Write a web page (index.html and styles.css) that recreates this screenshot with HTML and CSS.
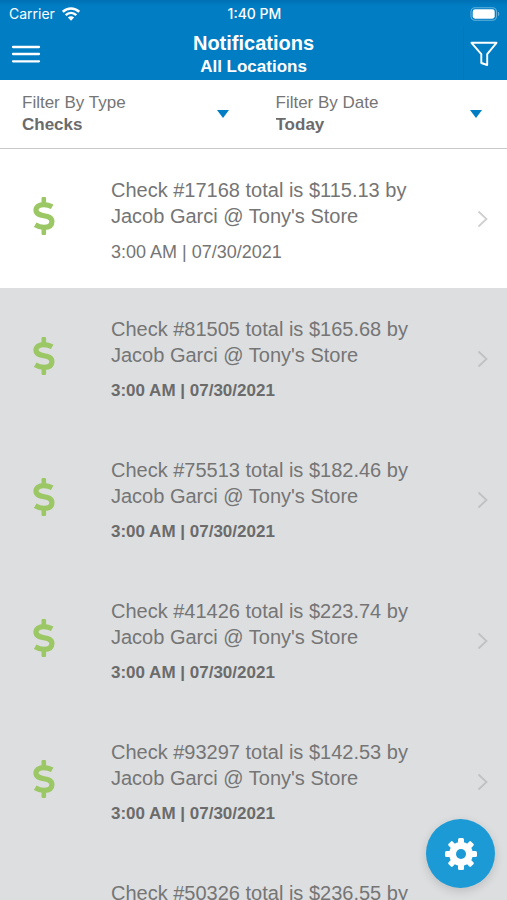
FILE: index.html
```html
<!DOCTYPE html>
<html lang="en">
<head>
<meta charset="utf-8">
<meta name="viewport" content="width=device-width, initial-scale=1">
<title>Notifications</title>
<link rel="stylesheet" href="styles.css">
</head>
<body>
<svg class="defs" aria-hidden="true">
  <symbol id="dollar" viewBox="0 0 22 38">
    <path d="M19.200 9.800C16.500 8.300 14 7.600 11 7.600C6 7.600 3 9.700 3 13C3 21.500 18.900 15.900 18.900 24.500C18.900 28.500 16 30.400 11 30.400C8 30.400 5 29.500 2.200 27.800" fill="none" stroke="currentColor" stroke-width="5.200"/>
    <path d="M10.800 1.800V7M10.800 31V36.200" fill="none" stroke="currentColor" stroke-width="4.600" stroke-linecap="round"/>
  </symbol>
  <symbol id="chevron" viewBox="0 0 12 18">
    <path d="M1.500 1.500L9.500 9L1.500 16.500" fill="none" stroke="currentColor" stroke-width="1.800"/>
  </symbol>
</svg>

<header class="topbar">
  <div class="status">
    <span class="carrier">Carrier
      <svg width="18" height="14" viewBox="0 0 18 14" aria-hidden="true">
        <path d="M.8 4.800C5.500 .3 12.500 .3 17.200 4.800M3.700 8.100C6.800 5.200 11.200 5.200 14.300 8.100" fill="none" stroke="currentColor" stroke-width="2.500"/>
        <path d="M9 13.700L5.900 10.500C7.600 8.900 10.400 8.900 12.100 10.500Z" fill="currentColor"/>
      </svg>
    </span>
    <span class="clock">1:40 PM</span>
    <svg class="battery" width="30" height="14" viewBox="0 0 30 14" aria-hidden="true">
      <rect x="1" y=".7" width="25.500" height="12.600" rx="4" fill="none" stroke="#66b1db" stroke-width="1.100"/>
      <rect x="2.700" y="2.300" width="22" height="9.400" rx="2.400" fill="currentColor"/>
      <path d="M28 4.800C29.700 5.400 29.700 8.600 28 9.200Z" fill="#66b1db"/>
    </svg>
  </div>
  <div class="navbar">
    <button class="nav-button" type="button" aria-label="Menu">
      <svg width="30" height="20" viewBox="0 0 30 20"><path d="M2 3H28M2 10H28M2 17.300H28" stroke="currentColor" stroke-width="2.300" stroke-linecap="round"/></svg>
    </button>
    <div class="titles">
      <h1>Notifications</h1>
      <p>All Locations</p>
    </div>
    <button class="nav-button nav-filter" type="button" aria-label="Filter">
      <svg width="28" height="26" viewBox="0 0 28 26"><path d="M1.500 1.800H26.500L17.200 13.200V24L11.300 22V13.200Z" fill="none" stroke="currentColor" stroke-width="1.900" stroke-linejoin="round"/></svg>
    </button>
  </div>
</header>

<form class="filters">
  <div class="filter">
    <label for="type">Filter By Type</label>
    <select id="type"><option>Checks</option></select>
    <svg class="caret" width="12" height="8" viewBox="0 0 12 8" aria-hidden="true"><path d="M0 0H12L6 8Z" fill="currentColor"/></svg>
  </div>
  <div class="filter">
    <label for="date">Filter By Date</label>
    <select id="date"><option>Today</option></select>
    <svg class="caret" width="12" height="8" viewBox="0 0 12 8" aria-hidden="true"><path d="M0 0H12L6 8Z" fill="currentColor"/></svg>
  </div>
</form>

<main class="list">
  <a class="row read" href="#17168">
    <svg class="dollar" aria-hidden="true"><use href="#dollar"/></svg>
    <div class="body"><p class="message">Check #17168 total is $115.13 by Jacob Garci @ Tony's Store</p><p class="time">3:00 AM | 07/30/2021</p></div>
    <svg class="chevron" aria-hidden="true"><use href="#chevron"/></svg>
  </a>
  <a class="row" href="#81505">
    <svg class="dollar" aria-hidden="true"><use href="#dollar"/></svg>
    <div class="body"><p class="message">Check #81505 total is $165.68 by Jacob Garci @ Tony's Store</p><p class="time">3:00 AM | 07/30/2021</p></div>
    <svg class="chevron" aria-hidden="true"><use href="#chevron"/></svg>
  </a>
  <a class="row" href="#75513">
    <svg class="dollar" aria-hidden="true"><use href="#dollar"/></svg>
    <div class="body"><p class="message">Check #75513 total is $182.46 by Jacob Garci @ Tony's Store</p><p class="time">3:00 AM | 07/30/2021</p></div>
    <svg class="chevron" aria-hidden="true"><use href="#chevron"/></svg>
  </a>
  <a class="row" href="#41426">
    <svg class="dollar" aria-hidden="true"><use href="#dollar"/></svg>
    <div class="body"><p class="message">Check #41426 total is $223.74 by Jacob Garci @ Tony's Store</p><p class="time">3:00 AM | 07/30/2021</p></div>
    <svg class="chevron" aria-hidden="true"><use href="#chevron"/></svg>
  </a>
  <a class="row" href="#93297">
    <svg class="dollar" aria-hidden="true"><use href="#dollar"/></svg>
    <div class="body"><p class="message">Check #93297 total is $142.53 by Jacob Garci @ Tony's Store</p><p class="time">3:00 AM | 07/30/2021</p></div>
    <svg class="chevron" aria-hidden="true"><use href="#chevron"/></svg>
  </a>
  <a class="row" href="#50326">
    <svg class="dollar" aria-hidden="true"><use href="#dollar"/></svg>
    <div class="body"><p class="message">Check #50326 total is $236.55 by Jacob Garci @ Tony's Store</p><p class="time">3:00 AM | 07/30/2021</p></div>
    <svg class="chevron" aria-hidden="true"><use href="#chevron"/></svg>
  </a>
</main>

<button class="fab" type="button" aria-label="Settings">
  <svg width="34" height="34" viewBox="-17 -17 34 34">
    <g fill="currentColor">
      <g id="teeth">
        <rect x="-3" y="-16" width="6" height="32" rx="1.500"/>
        <rect x="-16" y="-3" width="32" height="6" rx="1.500"/>
      </g>
      <use href="#teeth" transform="rotate(45)"/>
    </g>
    <circle r="8.400" fill="none" stroke="currentColor" stroke-width="7"/>
    <circle class="gear-hole" r="5"/>
  </svg>
</button>
</body>
</html>
```

FILE: styles.css
```css
* {
  box-sizing: border-box;
}

html,
body {
  height: 100%;
}

body {
  margin: 0;
  display: flex;
  flex-direction: column;
  overflow: hidden;
  background: #dcdee0;
  color: #757575;
  font-family: "Liberation Sans", Arial, sans-serif;
}

h1,
p {
  margin: 0;
}

button {
  padding: 0;
  border: 0;
  background: none;
  color: inherit;
}

svg {
  display: block;
  flex: none;
}

.defs {
  display: none;
}

.topbar {
  flex: none;
  background: linear-gradient(#0070b4, #007dc3 6px);
  color: #fff;
}

.status {
  display: grid;
  grid-template-columns: 1fr auto 1fr;
  align-items: center;
  height: 27px;
  padding: 0 7px 0 9px;
  font: 400 14px/27px Inter, sans-serif;
}

.carrier {
  display: flex;
  align-items: center;
  gap: 7px;
}

.clock {
  font-weight: 500;
}

.battery {
  justify-self: end;
}

.navbar {
  display: grid;
  grid-template-columns: 44px 1fr 44px;
  height: 53px;
}

.nav-button {
  display: flex;
  align-items: center;
  padding-left: 11px;
}

.nav-filter {
  padding-left: 6px;
  border-left: 1px solid #0077bb;
}

.titles {
  padding-top: 4px;
  text-align: center;
}

.titles h1 {
  font-size: 20px;
  line-height: 24px;
}

.titles p {
  font-weight: 700;
  font-size: 17px;
  line-height: 24px;
}

.filters {
  flex: none;
  display: grid;
  grid-template-columns: 1fr 1fr;
  border-bottom: 1px solid #c8c8c8;
  background: #fff;
}

.filter {
  position: relative;
  display: flex;
  flex-direction: column;
  padding: 12px 22px;
  font-size: 17px;
  line-height: 22px;
}

.filter select {
  appearance: none;
  height: 22px;
  padding: 0;
  border: 0;
  background: none;
  color: #6b6b6b;
  font: inherit;
  font-weight: 700;
}

.caret {
  position: absolute;
  top: 30px;
  right: 25px;
  color: #007dc3;
  pointer-events: none;
}

.list {
  flex: 1;
  min-height: 0;
  overflow: hidden;
}

.row {
  display: grid;
  grid-template-columns: 111px 1fr auto;
  align-items: center;
  min-height: 141px;
  padding-right: 18px;
  color: inherit;
  text-decoration: none;
}

.read {
  min-height: 139px;
  background: #fff;
}

.dollar {
  width: 22px;
  height: 38px;
  margin-left: 33px;
  margin-bottom: 6px;
  color: #9bc765;
}

.body {
  align-self: start;
  padding-top: 28px;
}

.message {
  max-width: 320px;
  font-size: 20px;
  line-height: 26px;
}

.time {
  margin-top: 12px;
  color: #6b6b6b;
  font-weight: 700;
  font-size: 17px;
  line-height: 22px;
}

.read .time {
  color: inherit;
  font-weight: 400;
  font-size: 18px;
}

.chevron {
  width: 12px;
  height: 18px;
  color: #bfc1c3;
}

.read .chevron {
  color: #cfcfcf;
}

.fab {
  position: fixed;
  right: 12px;
  bottom: 12px;
  display: grid;
  place-items: center;
  width: 69px;
  height: 69px;
  border-radius: 50%;
  background: #1b9ad6;
  box-shadow: 0 3px 10px rgb(0 0 0 / 15%);
  color: #fff;
}

.gear-hole {
  fill: #1b9ad6;
}
```
